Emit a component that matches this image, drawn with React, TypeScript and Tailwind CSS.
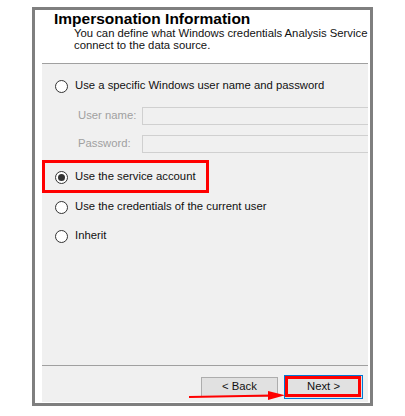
import React from "react";

const font = { fontFamily: '"Liberation Sans", Arial, sans-serif' };

const Radio = ({ checked = false }: { checked?: boolean }) => (
  <span className="w-[13px] h-[13px] rounded-full border border-[#333] bg-white flex items-center justify-center shrink-0">
    {checked && <span className="w-[7px] h-[7px] rounded-full bg-[#333]" />}
  </span>
);

const Option = ({ label, checked = false }: { label: string; checked?: boolean }) => (
  <div className="h-[16px] flex items-center gap-[7px]">
    <Radio checked={checked} />
    <span className="text-[11.3px] text-[#111] leading-none whitespace-nowrap">{label}</span>
  </div>
);

const Field = ({ label }: { label: string }) => (
  <div className="h-[18px] flex items-center pl-[36px]">
    <span className="w-[64px] text-[11.3px] text-[#a0a0a0] leading-none">{label}</span>
    <div className="flex-1 h-[18px] border border-[#d0d0d0] bg-[#f0f0f0] mr-[-4px]" />
  </div>
);

export default function App() {
  return (
    <div className="relative w-[405px] h-[416px] bg-white pt-[7px] pl-[32px]" style={font}>
      <div className="w-[341px] h-[399px] border-[3px] border-[#7f7f7f] bg-white flex flex-col pl-[7px] pr-[2px] pb-[1px] overflow-hidden">
        {/* Header */}
        <div className="h-[53px] pl-[12px] whitespace-nowrap">
          <div className="text-[15.5px] font-bold leading-[18px] text-black">Impersonation Information</div>
          <div className="pl-[20px] text-[11.3px] leading-[11.5px] text-[#111]">
            <div>You can define what Windows credentials Analysis Service</div>
            <div>connect to the data source.</div>
          </div>
        </div>
        <div className="h-px bg-[#a0a0a0]" />

        {/* Body */}
        <div className="flex-1 bg-[#f0f0f0] flex flex-col overflow-hidden">
          <div className="pt-[14px] pl-[13px]">
            <Option label="Use a specific Windows user name and password" />
          </div>
          <div className="mt-[13px]">
            <Field label="User name:" />
          </div>
          <div className="mt-[10px]">
            <Field label="Password:" />
          </div>
          <div className="mt-[7px] w-[167px] h-[33px] border-[3px] border-[#ff0000] pl-[10px] pt-px flex items-center">
            <Option label="Use the service account" checked />
          </div>
          <div className="mt-[6px] pl-[13px]">
            <Option label="Use the credentials of the current user" />
          </div>
          <div className="mt-[13px] pl-[13px]">
            <Option label="Inherit" />
          </div>
        </div>
        <div className="h-px bg-[#a0a0a0]" />

        {/* Footer */}
        <div className="h-[36px] bg-[#f0f0f0] flex items-center justify-end gap-[6px] pt-[5px] pr-[5px]">
          <button className="w-[77px] h-[20px] border border-[#adadad] bg-[#e1e1e1] text-[11.3px] text-[#111] leading-none">
            &lt; Back
          </button>
          <button className="relative w-[79px] h-[24px] border border-[#0078d7] bg-[#e1e1e1] text-[11.3px] text-[#111] leading-none">
            Next &gt;
            <span className="absolute left-0 top-0 right-[1px] bottom-[1px] border-[3px] border-[#ff0000]" />
          </button>
        </div>
      </div>

      {/* Arrow annotation */}
      <svg className="absolute left-0 top-0" width="405" height="416" viewBox="0 0 405 416">
        <line x1="189" y1="397" x2="272" y2="395.5" stroke="#ff0000" strokeWidth="2.2" />
        <polygon points="268,391 285,395.3 268,400" fill="#ff0000" />
      </svg>
    </div>
  );
}
